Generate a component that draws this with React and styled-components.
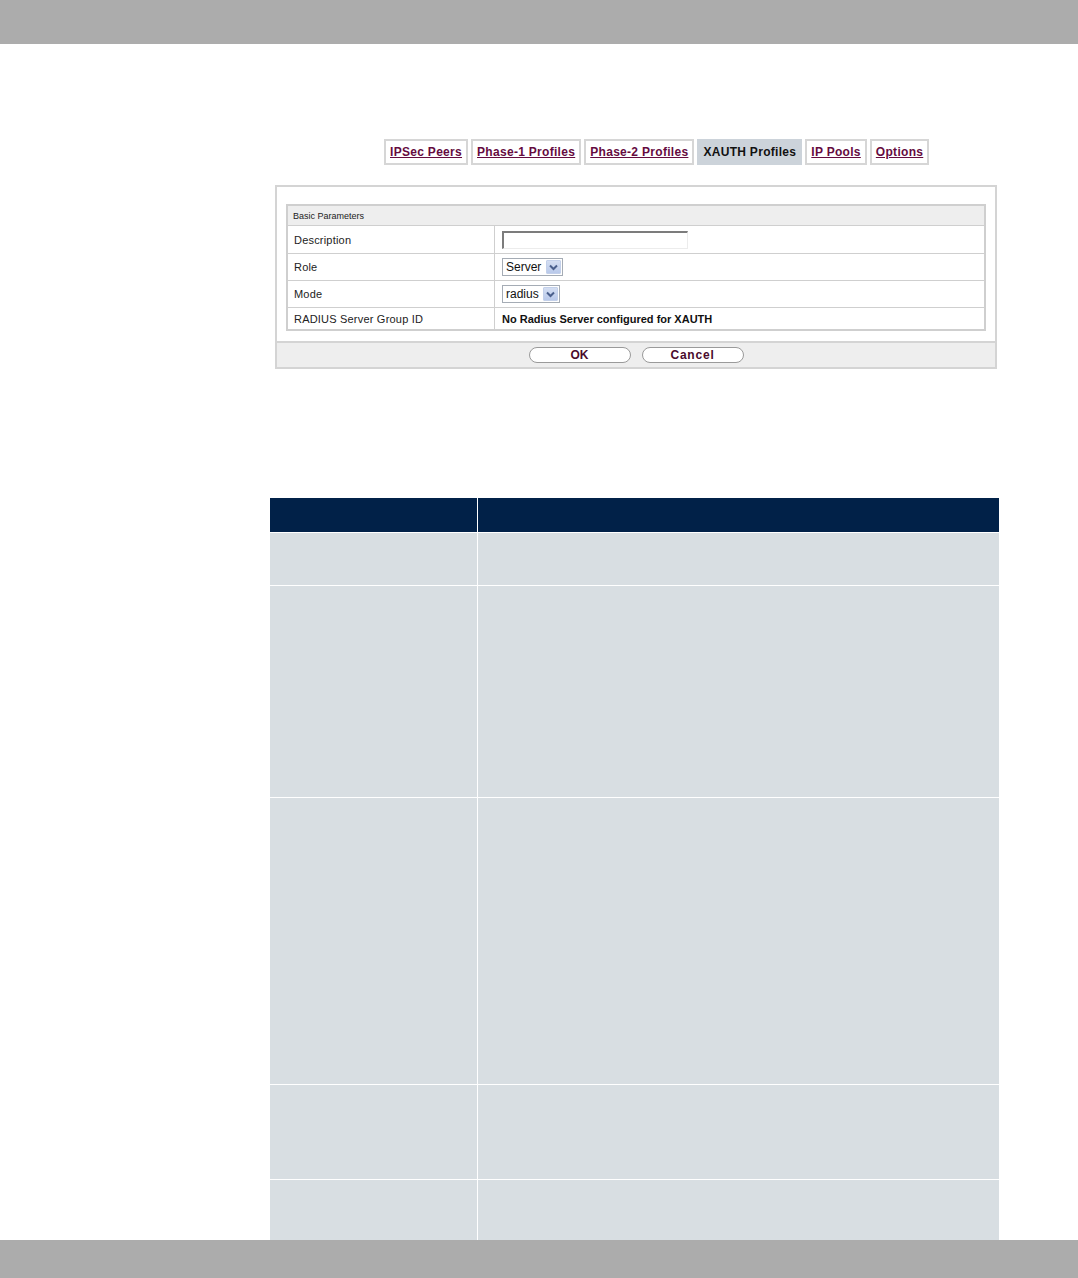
import React from "react";
import styled, { createGlobalStyle } from "styled-components";

const Global = createGlobalStyle`
  html, body { margin: 0; padding: 0; background: #ffffff; }
  body { font-family: "Liberation Sans", Arial, sans-serif; }
`;

const Page = styled.div`
  height: 1278px;
  display: flex;
  flex-direction: column;
  overflow: hidden;
`;

const Bar = styled.div`
  flex: 0 0 ${(p) => p.$h}px;
  background: #acacac;
`;

const Content = styled.div`
  flex: 1 1 auto;
  overflow: hidden;
  padding: 95px 0 0 270px;
`;

const Tabs = styled.div`
  display: flex;
  gap: 3px;
  margin-left: 114px;
  height: 26px;
`;

const Tab = styled.a`
  display: flex;
  align-items: center;
  box-sizing: border-box;
  height: 26px;
  padding: 0 4px;
  border: 2px solid ${(p) => (p.$active ? "#ccd3da" : "#d6d6d6")};
  background: ${(p) => (p.$active ? "#ccd3da" : "#ffffff")};
  color: ${(p) => (p.$active ? "#111111" : "#650b3f")};
  text-decoration: ${(p) => (p.$active ? "none" : "underline")};
  font-size: 12px;
  font-weight: bold;
  letter-spacing: 0.3px;
  white-space: nowrap;
  cursor: pointer;
`;

const Panel = styled.div`
  box-sizing: border-box;
  margin: 20px 0 0 5px;
  width: 722px;
  border: 2px solid #d4d4d4;
  padding-top: 17px;
`;

const Params = styled.div`
  box-sizing: border-box;
  margin: 0 9px;
  border: 2px solid #cfcfcf;
  display: grid;
  grid-template-columns: 207px 1fr;
`;

const ParamsHead = styled.div`
  grid-column: 1 / -1;
  height: 19px;
  background: #eeeeee;
  border-bottom: 1px solid #cfcfcf;
  font-size: 9px;
  color: #222;
  display: flex;
  align-items: center;
  padding-left: 5px;
`;

const Label = styled.div`
  height: ${(p) => p.$h}px;
  display: flex;
  align-items: center;
  padding-left: 6px;
  font-size: 11px;
  color: #222;
  border-right: 1px solid #cfcfcf;
  border-bottom: ${(p) => (p.$last ? "none" : "1px solid #cfcfcf")};
  letter-spacing: 0.2px;
`;

const Value = styled.div`
  height: ${(p) => p.$h}px;
  display: flex;
  align-items: center;
  padding-left: 7px;
  font-size: 11px;
  border-bottom: ${(p) => (p.$last ? "none" : "1px solid #cfcfcf")};
`;

const BoldText = styled.span`
  font-weight: bold;
  color: #111;
  font-size: 11px;
`;

const TextInput = styled.input`
  box-sizing: border-box;
  width: 186px;
  height: 18px;
  border-style: solid;
  border-color: #7c7c7c #ececec #ececec #7c7c7c;
  border-width: 2px 1px 1px 2px;
  background: #fff;
  padding: 0 3px;
  outline: none;
`;

const SelectBox = styled.div`
  box-sizing: border-box;
  display: flex;
  align-items: center;
  height: 18px;
  width: ${(p) => p.$w}px;
  border: 1px solid #a5acb5;
  background: #fff;
  padding: 1px;
`;

const SelectEl = styled.select`
  appearance: none;
  -webkit-appearance: none;
  border: none;
  outline: none;
  background: transparent;
  font-family: "Liberation Sans", Arial, sans-serif;
  font-size: 12px;
  color: #111;
  padding: 0 0 0 2px;
  flex: 1 1 auto;
  min-width: 0;
  height: 14px;
  line-height: 14px;
`;

const Arrow = styled.span`
  flex: 0 0 15px;
  height: 14px;
  background: linear-gradient(#d4def2, #b9c9ea);
  border: 1px solid #c3d0ea;
  box-sizing: border-box;
  display: flex;
  align-items: center;
  justify-content: center;
  border-radius: 1px;
`;

const Footer = styled.div`
  margin-top: 10px;
  border-top: 2px solid #d4d4d4;
  background: #eeeeee;
  height: 24px;
  display: flex;
  align-items: center;
  justify-content: center;
  gap: 11px;
`;

const Button = styled.button`
  box-sizing: border-box;
  width: 102px;
  height: 16px;
  border: 1px solid #9a9a9a;
  border-radius: 8px;
  background: #ffffff;
  font-family: "Liberation Sans", Arial, sans-serif;
  font-weight: bold;
  font-size: 12px;
  letter-spacing: ${(p) => p.$ls || 0}px;
  color: #4a0b2c;
  padding: 0;
  display: flex;
  align-items: center;
  justify-content: center;
`;

const InfoTable = styled.div`
  margin-top: 129px;
  width: 729px;
  display: grid;
  grid-template-columns: 207px 1fr;
  column-gap: 1px;
  row-gap: 1px;
  background: #ffffff;
`;

const HeadCell = styled.div`
  height: 34px;
  background: #012148;
`;

const Cell = styled.div`
  height: ${(p) => p.$h}px;
  background: #d8dee2;
`;

const Chevron = () => (
  <svg width="9" height="7" viewBox="0 0 9 7">
    <path d="M1 1.5 L4.5 5 L8 1.5" fill="none" stroke="#4a5f8c" strokeWidth="2" />
  </svg>
);

const Select = ({ w, value }) => (
  <SelectBox $w={w}>
    <SelectEl defaultValue={value}>
      <option>{value}</option>
    </SelectEl>
    <Arrow>
      <Chevron />
    </Arrow>
  </SelectBox>
);

const tabs = [
  "IPSec Peers",
  "Phase-1 Profiles",
  "Phase-2 Profiles",
  "XAUTH Profiles",
  "IP Pools",
  "Options",
];

const rowHeights = [52, 211, 286, 94, 70];

export default function App() {
  return (
    <Page>
      <Global />
      <Bar $h={44} />
      <Content>
        <Tabs>
          {tabs.map((t) => (
            <Tab key={t} $active={t === "XAUTH Profiles"}>
              {t}
            </Tab>
          ))}
        </Tabs>
        <Panel>
          <Params>
            <ParamsHead>Basic Parameters</ParamsHead>
            <Label $h={27}>Description</Label>
            <Value $h={27}>
              <TextInput type="text" />
            </Value>
            <Label $h={26}>Role</Label>
            <Value $h={26}>
              <Select w={61} value="Server" />
            </Value>
            <Label $h={26}>Mode</Label>
            <Value $h={26}>
              <Select w={58} value="radius" />
            </Value>
            <Label $h={21} $last>
              RADIUS Server Group ID
            </Label>
            <Value $h={21} $last>
              <BoldText>No Radius Server configured for XAUTH</BoldText>
            </Value>
          </Params>
          <Footer>
            <Button>OK</Button>
            <Button $ls={0.8}>Cancel</Button>
          </Footer>
        </Panel>
        <InfoTable>
          <HeadCell />
          <HeadCell />
          {rowHeights.map((h, i) => (
            <React.Fragment key={i}>
              <Cell $h={h} />
              <Cell $h={h} />
            </React.Fragment>
          ))}
        </InfoTable>
      </Content>
      <Bar $h={38} />
    </Page>
  );
}
